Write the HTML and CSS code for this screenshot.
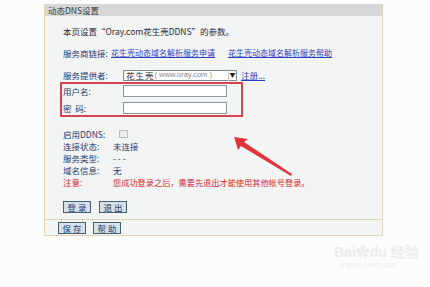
FILE: index.html
```html
<!DOCTYPE html>
<html lang="zh-CN">
<head>
    <meta charset="UTF-8">
    <title>动态DNS设置</title>
    <link rel="stylesheet" href="styles.css">
</head>
<body>
    <div class="panel">
        <div class="title">动态DNS设置</div>
        <div class="content">
            <div class="row intro">本页设置“Oray.com花生壳DDNS”的参数。</div>
            <div class="row links">
                <span class="label">服务商链接:</span>
                <a href="#" class="link">花生壳动态域名解析服务申请</a>
                <a href="#" class="link second">花生壳动态域名解析服务帮助</a>
            </div>
            <div class="row form">
                <span class="label wide">服务提供者:</span>
                <span class="select"><b>花生壳</b><i>( www.oray.com )</i><em>▼</em></span>
                <a href="#" class="link reg">注册...</a>
            </div>
            <div class="redbox">
                <div class="row form">
                    <span class="label wide">用户名:</span>
                    <span class="input"></span>
                </div>
                <div class="row form gap">
                    <span class="label wide">密&nbsp;&nbsp;码:</span>
                    <span class="input"></span>
                </div>
            </div>
            <div class="status">
                <div class="row">
                    <span class="label">启用DDNS:</span>
                    <span class="check"></span>
                </div>
                <div class="row">
                    <span class="label">连接状态:</span>
                    <span class="value">未连接</span>
                </div>
                <div class="row">
                    <span class="label">服务类型:</span>
                    <span class="value">- - -</span>
                </div>
                <div class="row">
                    <span class="label">域名信息:</span>
                    <span class="value">无</span>
                </div>
                <div class="row warn">
                    <span class="label">注意:</span>
                    <span class="value">您成功登录之后，需要先退出才能使用其他帐号登录。</span>
                </div>
            </div>
            <div class="buttons">
                <button>登录</button>
                <button>退出</button>
            </div>
        </div>
        <div class="footer">
            <button>保存</button>
            <button>帮助</button>
        </div>
    </div>

    <svg class="arrow" width="70" height="46" viewBox="0 0 70 46">
        <polygon points="2,1 16,3 12,6 60,38 59,40 9,10 6,14" fill="#e2343a"/>
    </svg>

    <div class="mark">
        <div class="mark-logo">Bai<span>✿</span>du 经验</div>
        <div class="mark-url">jingyan.baidu.com</div>
    </div>
</body>
</html>
```

FILE: styles.css
```css
*{
    padding: 0;
    margin: 0;
    box-sizing: border-box;
}
body{
    background-color: #fcfcfc;
    font-family: "Noto Sans CJK SC", sans-serif;
    font-size: 8.5px;
    color: #1f3a72;
    position: relative;
    width: 430px;
    height: 287px;
    overflow: hidden;
}
.panel{
    margin: 4px 0 0 44px;
    width: 339px;
    border: 1px solid #e2d3b8;
    border-top: none;
    background-color: #f3f4f4;
}
.title{
    height: 12px;
    line-height: 12px;
    padding-left: 3px;
    background-color: #d7d7d7;
    color: #3a3a3a;
}
.content{
    padding: 9px 0 6px 18px;
}
.row{
    display: flex;
    align-items: center;
    height: 12px;
    line-height: 12px;
    white-space: nowrap;
}
.intro{
    color: #2b2b3a;
}
.links{
    margin-top: 10px;
}
.label{
    width: 50px;
}
.label.wide{
    width: 60px;
}
.link{
    color: #2b3fc2;
    text-decoration: underline;
}
.links .label{
    width: 48px;
}
.links .link{
    font-size: 8px;
}
.link.second{
    margin-left: 13px;
}
.form{
    margin-top: 10px;
}
.select{
    display: flex;
    align-items: center;
    width: 114px;
    height: 11px;
    background-color: #fff;
    border: 1px solid #7d8a96;
    padding-left: 2px;
}
.select b{
    font-weight: normal;
    color: #333;
    letter-spacing: 1px;
}
.select i{
    font-style: normal;
    color: #8a8a8a;
    font-family: "Liberation Sans", sans-serif;
    font-size: 7.5px;
}
.select em{
    font-style: normal;
    font-size: 6px;
    color: #222;
    margin-left: auto;
    width: 8px;
    text-align: center;
    border-left: 1px solid #ccc;
}
.reg{
    margin-left: 4px;
}
.redbox{
    margin: 1px 0 0 -3px;
    width: 183px;
    height: 35px;
    border: 2px solid #d7434f;
    padding: 1px 0 0 1px;
}
.redbox .form{
    margin-top: 0;
}
.redbox .form.gap{
    margin-top: 5px;
}
.input{
    width: 104px;
    height: 12px;
    background-color: #fff;
    border: 1px solid #8b979c;
}
.status{
    margin-top: 11px;
}
.check{
    width: 9px;
    height: 8px;
    margin-left: 6px;
    border: 1px solid #b9bec4;
    background-color: #eceef0;
}
.warn{
    color: #d7282e;
}
.warn .value{
    font-size: 8.2px;
}
.buttons{
    display: flex;
    gap: 8px;
    margin-top: 13px;
}
button{
    width: 28px;
    height: 12px;
    background-color: #d5e0e8;
    border: 1px solid #45606f;
    color: #1f3a72;
    font-family: "Noto Sans CJK SC", sans-serif;
    font-size: 8.5px;
    letter-spacing: 2px;
    line-height: 10px;
    padding-left: 2px;
}
.footer{
    display: flex;
    gap: 7px;
    border-top: 1px solid #e2d3b8;
    padding: 2px 0 1px 13px;
}
.arrow{
    position: absolute;
    left: 232px;
    top: 136px;
}
.mark{
    position: absolute;
    left: 334px;
    top: 244px;
    color: #ececec;
    font-family: "Liberation Sans", "Noto Sans CJK SC", sans-serif;
}
.mark-logo{
    font-size: 14px;
    font-weight: bold;
    line-height: 16px;
}
.mark-url{
    font-size: 7px;
    line-height: 9px;
    margin-left: 6px;
}
```
